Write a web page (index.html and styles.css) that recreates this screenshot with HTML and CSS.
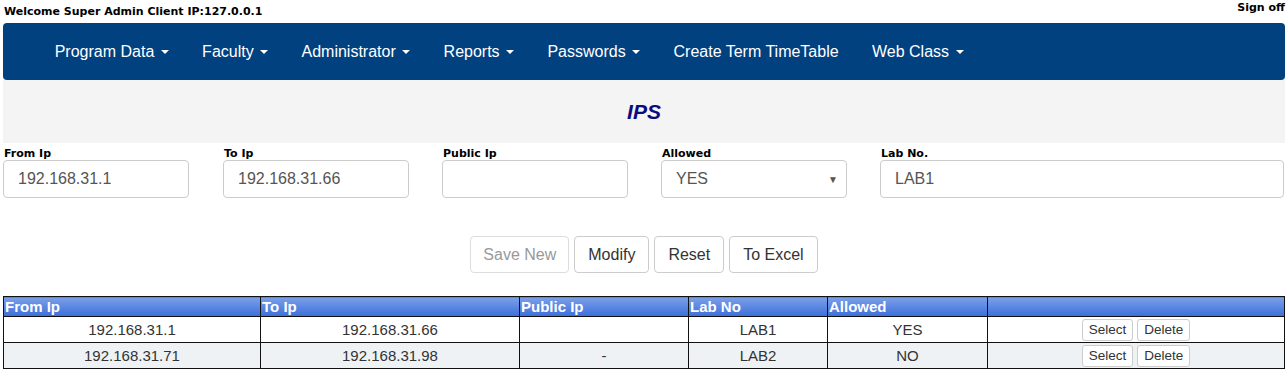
FILE: index.html
```html
<!DOCTYPE html>
<html>
<head>
<meta charset="utf-8">
<link rel="stylesheet" href="styles.css">
</head>
<body>
<div class="topbar">
  <span class="welcome">Welcome Super Admin Client IP:127.0.0.1</span>
  <a class="signoff" href="#">Sign off</a>
</div>
<nav class="navbar">
  <ul class="nav">
    <li><a href="#">Program Data <span class="caret"></span></a></li>
    <li><a href="#">Faculty <span class="caret"></span></a></li>
    <li><a href="#">Administrator <span class="caret"></span></a></li>
    <li><a href="#">Reports <span class="caret"></span></a></li>
    <li><a href="#">Passwords <span class="caret"></span></a></li>
    <li><a href="#">Create Term TimeTable</a></li>
    <li><a href="#">Web Class <span class="caret"></span></a></li>
  </ul>
</nav>
<div class="titleband"><h1>IPS</h1></div>
<div class="form">
  <div class="field first"><label>From Ip</label><input type="text" value="192.168.31.1"></div>
  <div class="field"><label>To Ip</label><input type="text" value="192.168.31.66"></div>
  <div class="field"><label>Public Ip</label><input type="text" value=""></div>
  <div class="field"><label>Allowed</label><div class="select"><span>YES</span><span class="arrow">▼</span></div></div>
  <div class="field wide"><label>Lab No.</label><input type="text" value="LAB1"></div>
</div>
<div class="actions">
  <button class="btn disabled">Save New</button>
  <button class="btn">Modify</button>
  <button class="btn">Reset</button>
  <button class="btn">To Excel</button>
</div>
<table class="grid">
  <colgroup>
    <col style="width:257px"><col style="width:259px"><col style="width:169px"><col style="width:139px"><col style="width:160px"><col>
  </colgroup>
  <thead>
    <tr><th>From Ip</th><th>To Ip</th><th>Public Ip</th><th>Lab No</th><th>Allowed</th><th></th></tr>
  </thead>
  <tbody>
    <tr><td>192.168.31.1</td><td>192.168.31.66</td><td></td><td>LAB1</td><td>YES</td><td><button class="btn-xs">Select</button> <button class="btn-xs">Delete</button></td></tr>
    <tr class="alt"><td>192.168.31.71</td><td>192.168.31.98</td><td>-</td><td>LAB2</td><td>NO</td><td><button class="btn-xs">Select</button> <button class="btn-xs">Delete</button></td></tr>
  </tbody>
</table>
</body>
</html>
```

FILE: styles.css
```css
* { box-sizing: border-box; }
body {
  margin: 0;
  font-family: "Liberation Sans", Arial, sans-serif;
  background: #fff;
  color: #333;
}
.topbar {
  height: 23px;
  display: flex;
  justify-content: space-between;
  padding: 0 3px 0 4px;
  font-family: "DejaVu Sans", Verdana, sans-serif;
  font-weight: bold;
  font-size: 11px;
  color: #000;
}
.welcome { padding-top: 5px; }
.signoff { color: #000; text-decoration: none; padding-top: 1px; }
.navbar {
  margin: 0 3px;
  height: 57px;
  background: #01417f;
  border-radius: 4px;
  display: flex;
  align-items: center;
}
.nav {
  list-style: none;
  margin: 0;
  padding: 0 0 0 35px;
  display: flex;
}
.nav a {
  display: block;
  padding: 0 16.7px;
  color: #fff;
  text-decoration: none;
  font-size: 16px;
  line-height: 20px;
}
.caret {
  display: inline-block;
  width: 0;
  height: 0;
  margin-left: 2px;
  vertical-align: middle;
  border-top: 4px solid #fff;
  border-left: 4px solid transparent;
  border-right: 4px solid transparent;
}
.titleband {
  margin: 0 3px;
  height: 63px;
  background: #f4f4f4;
  display: flex;
  align-items: center;
  justify-content: center;
}
.titleband h1 {
  margin: 0;
  font-size: 21px;
  font-style: italic;
  font-weight: bold;
  color: #0b0b80;
}
.form {
  display: flex;
  padding: 4px 4px 0 3px;
}
.field {
  width: 219px;
  display: flex;
  flex-direction: column;
}
.field.first { width: 220px; }
.field.wide { flex: 1; }
.field label {
  font-family: "DejaVu Sans", Verdana, sans-serif;
  font-weight: bold;
  font-size: 11px;
  color: #000;
  padding-left: 1px;
  height: 13px;
  line-height: 13px;
}
.field input, .select {
  width: 186px;
  height: 38px;
  border: 1px solid #ccc;
  border-radius: 4px;
  padding: 0 14px;
  font-family: "Liberation Sans", Arial, sans-serif;
  font-size: 16px;
  color: #555;
  background: #fff;
}
.field.wide input { width: 100%; }
.select {
  display: flex;
  align-items: center;
  justify-content: space-between;
  padding-right: 8px;
}
.select .arrow { font-size: 10px; color: #555; }
.actions {
  display: flex;
  justify-content: center;
  gap: 5px;
  margin-top: 38px;
}
.btn {
  height: 37px;
  padding: 0 13px;
  font-family: "Liberation Sans", Arial, sans-serif;
  font-size: 16px;
  color: #333;
  background: #fff;
  border: 1px solid #ccc;
  border-radius: 4px;
}
.btn.disabled { color: #999; border-color: #ddd; padding: 0 12px; }
.grid {
  margin: 23px 3px 0 3px;
  width: 1282px;
  border-collapse: collapse;
  table-layout: fixed;
  border: 1px solid #111;
  font-size: 15px;
}
.grid th {
  height: 20px;
  padding: 0 1px;
  text-align: left;
  color: #fff;
  font-size: 15px;
  font-weight: bold;
  background: linear-gradient(#7aa0ea, #3c6fd9);
  border: 1px solid #111;
}
.grid td {
  height: 26px;
  text-align: center;
  color: #333;
  border: 1px solid #111;
  padding: 0;
}
.grid tr.alt td { background: #eef2f5; }
.btn-xs {
  height: 22px;
  padding: 0 6px;
  font-family: "Liberation Sans", Arial, sans-serif;
  font-size: 13.5px;
  color: #333;
  background: #fff;
  border: 1px solid #ccc;
  border-radius: 3px;
  vertical-align: middle;
}
```
